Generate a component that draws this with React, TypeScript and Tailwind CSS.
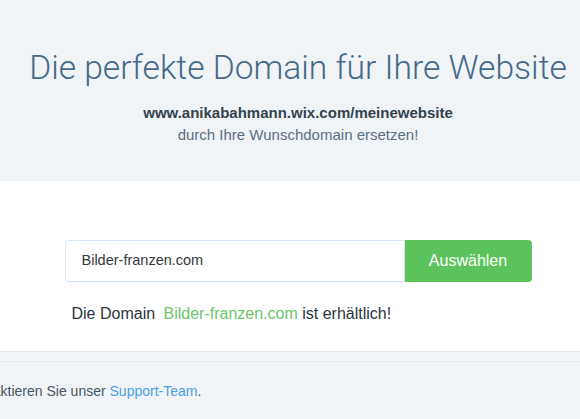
import React from "react";

export default function App() {
  return (
    <div className="w-[580px] h-[419px] overflow-hidden bg-white" style={{ fontFamily: '"Liberation Sans", Arial, sans-serif' }}>
      <header className="h-[181px] bg-[#f0f4f7] pl-4 flex flex-col items-center">
        <h1
          className="mt-[51px] text-[33.6px] leading-none font-light text-[#46698a] whitespace-nowrap"
          style={{ fontFamily: 'Roboto, "Liberation Sans", sans-serif' }}
        >
          Die perfekte Domain für Ihre Website
        </h1>
        <p className="mt-[19px] text-[15px] leading-[18px] font-bold text-[#34434f] whitespace-nowrap">
          www.anikabahmann.wix.com/meinewebsite
        </p>
        <p className="mt-[4px] text-[15px] leading-[18px] text-[#5d6f80] whitespace-nowrap">
          durch Ihre Wunschdomain ersetzen!
        </p>
      </header>

      <section className="h-[170px] pl-4 flex flex-col items-center">
        <div className="w-[467px] mt-[59px]">
          <div className="flex h-[42px]">
            <div className="flex-1 flex items-center border border-[#d6e6f5] rounded-l-[4px] pl-[16px] text-[14.5px] text-[#33383d]">
              Bilder-franzen.com
            </div>
            <button className="w-[127px] bg-[#5cc35c] rounded-r-[4px] text-white text-[16px]">
              Auswählen
            </button>
          </div>
          <p className="mt-[22px] pl-[7px] text-[16px] leading-[20px] text-[#2b3540] whitespace-nowrap">
            Die Domain <span className="ml-[4px] text-[#6cc56a]">Bilder-franzen.com</span> ist erhältlich!
          </p>
        </div>
      </section>

      <footer className="bg-[#f0f4f7] border-t border-[#e3e7ea] h-[68px]">
        <div className="h-[10px] border-b border-[#e6eaed]" />
        <p className="mt-[21px] -ml-[36px] text-[14px] leading-[17px] text-[#4a5560] whitespace-nowrap">
          Kontaktieren Sie unser <span className="text-[#4a9fe6]">Support-Team</span>.
        </p>
      </footer>
    </div>
  );
}
